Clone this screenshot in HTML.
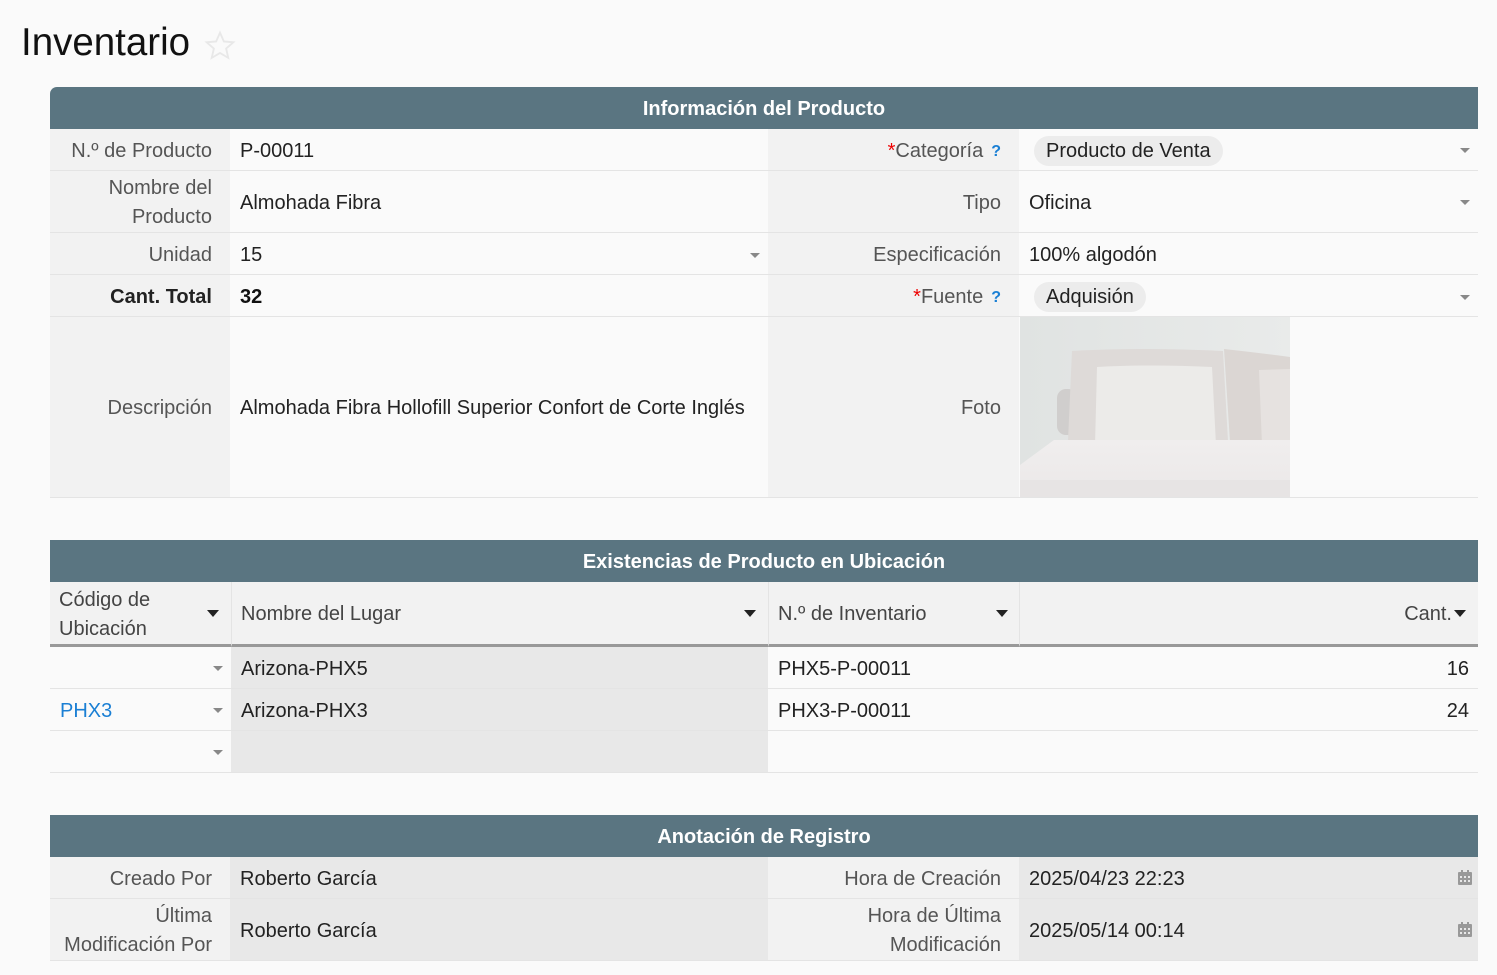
<!DOCTYPE html>
<html><head><meta charset="utf-8">
<style>
*{box-sizing:border-box;margin:0;padding:0}
body{width:1497px;height:975px;background:#fafafa;font-family:"Liberation Sans",sans-serif;color:#222;position:relative;overflow:hidden;font-size:20px}
.a{position:absolute}
.hd{position:absolute;left:50px;width:1428px;height:42px;background:#5a7581;color:#fff;font-weight:bold;font-size:20px;text-align:center;line-height:44px}
.lb{position:absolute;background:#f2f2f2;color:#555;text-align:right;padding-right:18px;padding-top:3px;display:flex;align-items:center;justify-content:flex-end;line-height:29px;border-bottom:1px solid #e4e4e4}
.vl{position:absolute;background:#fafafa;color:#222;padding-left:10px;padding-top:3px;display:flex;align-items:center;border-bottom:1px solid #e4e4e4}
.ro{background:#e8e8e8}
.dd{position:absolute;width:0;height:0;border-left:5px solid transparent;border-right:5px solid transparent;border-top:5px solid #888}
.ddb{position:absolute;width:0;height:0;border-left:6px solid transparent;border-right:6px solid transparent;border-top:7px solid #222}
.pill{background:#ececec;border-radius:16px;padding:4px 12px 3px;margin-left:5px;margin-top:-1px}
.req{color:#e00}
.q{color:#1a7fd4;font-size:16px;font-weight:bold;margin-left:8px}
.ch{position:absolute;background:#f2f2f2;color:#444;display:flex;align-items:center;padding-left:9px;padding-top:3px;line-height:29px;border-bottom:3px solid #999}
</style></head><body>
<div class="a" style="left:21px;top:21px;font-size:38.5px;color:#111">Inventario</div>
<svg class="a" style="left:204px;top:30px" width="32" height="32" viewBox="0 0 24 24"><path d="M12 2l2.9 6.6 7.1.6-5.4 4.7 1.6 7-6.2-3.7-6.2 3.7 1.6-7L2 9.2l7.1-.6z" fill="none" stroke="#e8e8e8" stroke-width="1.4"/></svg>

<div class="hd" style="top:87px;border-radius:7px 0 0 0">Información del Producto</div>
<div class="lb" style="left:50px;top:129px;width:180px;height:42px">N.º de Producto</div>
<div class="vl" style="left:230px;top:129px;width:538px;height:42px">P-00011</div>
<div class="lb" style="left:768px;top:129px;width:251px;height:42px"><span class="req">*</span>Categoría<span class="q">?</span></div>
<div class="vl" style="left:1019px;top:129px;width:459px;height:42px"><span class="pill">Producto de Venta</span></div>
<div class="dd" style="left:1460px;top:148px"></div>

<div class="lb" style="left:50px;top:171px;width:180px;height:62px">Nombre del<br>Producto</div>
<div class="vl" style="left:230px;top:171px;width:538px;height:62px">Almohada Fibra</div>
<div class="lb" style="left:768px;top:171px;width:251px;height:62px">Tipo</div>
<div class="vl" style="left:1019px;top:171px;width:459px;height:62px">Oficina</div>
<div class="dd" style="left:1460px;top:200px"></div>

<div class="lb" style="left:50px;top:233px;width:180px;height:42px">Unidad</div>
<div class="vl" style="left:230px;top:233px;width:538px;height:42px">15</div>
<div class="dd" style="left:750px;top:253px"></div>
<div class="lb" style="left:768px;top:233px;width:251px;height:42px">Especificación</div>
<div class="vl" style="left:1019px;top:233px;width:459px;height:42px">100% algodón</div>

<div class="lb" style="left:50px;top:275px;width:180px;height:42px;font-weight:bold;color:#222">Cant. Total</div>
<div class="vl" style="left:230px;top:275px;width:538px;height:42px;font-weight:bold;color:#111">32</div>
<div class="lb" style="left:768px;top:275px;width:251px;height:42px"><span class="req">*</span>Fuente<span class="q">?</span></div>
<div class="vl" style="left:1019px;top:275px;width:459px;height:42px"><span class="pill">Adquisión</span></div>
<div class="dd" style="left:1460px;top:295px"></div>

<div class="lb" style="left:50px;top:317px;width:180px;height:181px">Descripción</div>
<div class="vl" style="left:230px;top:317px;width:538px;height:181px">Almohada Fibra Hollofill Superior Confort de Corte Inglés</div>
<div class="lb" style="left:768px;top:317px;width:251px;height:181px">Foto</div>
<div class="vl" style="left:1019px;top:317px;width:459px;height:181px"></div>
<svg class="a" style="left:1020px;top:317px" width="270" height="180" viewBox="0 0 270 180">
<defs><linearGradient id="w" x1="0" x2="1"><stop offset="0" stop-color="#e0e3e2"/><stop offset="1" stop-color="#e9ebea"/></linearGradient>
<linearGradient id="m" x1="0" y1="0" x2="0" y2="1"><stop offset="0" stop-color="#f0eeee"/><stop offset="1" stop-color="#ebe8e8"/></linearGradient></defs>
<rect width="270" height="180" fill="url(#w)"/>
<rect x="37" y="72" width="20" height="46" rx="9" fill="#d0cecd"/>
<path d="M52 34 Q120 30 203 34 L208 124 L48 124 Z" fill="#dedad8"/>
<path d="M204 32 Q240 36 270 40 L270 125 L210 125 Z" fill="#dbd6d3"/>
<path d="M77 50 Q130 47 192 50 L196 128 L75 129 Z" fill="#ecebe9"/>
<path d="M239 53 L270 52 L270 128 L242 128 Z" fill="#e6e2e0"/>
<path d="M0 148 L34 123 L270 123 L270 180 L0 180 Z" fill="url(#m)"/>
<rect x="0" y="163" width="270" height="17" fill="#e7e4e4"/>
</svg>

<div class="hd" style="top:540px">Existencias de Producto en Ubicación</div>
<div class="ch" style="left:50px;top:582px;width:181px;height:65px">Código de<br>Ubicación</div>
<div class="ddb" style="left:207px;top:610px"></div>
<div class="ch" style="left:231px;top:582px;width:537px;height:65px;border-left:1px solid #e4e4e4">Nombre del Lugar</div>
<div class="ddb" style="left:744px;top:610px"></div>
<div class="ch" style="left:768px;top:582px;width:251px;height:65px;border-left:1px solid #e4e4e4">N.º de Inventario</div>
<div class="ddb" style="left:996px;top:610px"></div>
<div class="ch" style="left:1019px;top:582px;width:459px;height:65px;border-left:1px solid #e4e4e4;justify-content:flex-end;padding-right:26px">Cant.</div>
<div class="ddb" style="left:1454px;top:610px"></div>

<div class="vl" style="left:50px;top:647px;width:181px;height:42px"></div>
<div class="vl ro" style="left:231px;top:647px;width:537px;height:42px">Arizona-PHX5</div>
<div class="vl" style="left:768px;top:647px;width:710px;height:42px">PHX5-P-00011<span style="margin-left:auto;padding-right:9px">16</span></div>
<div class="vl" style="left:50px;top:689px;width:181px;height:42px;color:#1a7fd4">PHX3</div>
<div class="vl ro" style="left:231px;top:689px;width:537px;height:42px">Arizona-PHX3</div>
<div class="vl" style="left:768px;top:689px;width:710px;height:42px">PHX3-P-00011<span style="margin-left:auto;padding-right:9px">24</span></div>
<div class="vl" style="left:50px;top:731px;width:181px;height:42px"></div>
<div class="vl ro" style="left:231px;top:731px;width:537px;height:42px"></div>
<div class="vl" style="left:768px;top:731px;width:710px;height:42px"></div>
<div class="dd" style="left:213px;top:666px"></div>
<div class="dd" style="left:213px;top:708px"></div>
<div class="dd" style="left:213px;top:750px"></div>

<div class="hd" style="top:815px">Anotación de Registro</div>
<div class="lb" style="left:50px;top:857px;width:180px;height:42px">Creado Por</div>
<div class="vl ro" style="left:230px;top:857px;width:538px;height:42px">Roberto García</div>
<div class="lb" style="left:768px;top:857px;width:251px;height:42px">Hora de Creación</div>
<div class="vl ro" style="left:1019px;top:857px;width:459px;height:42px">2025/04/23 22:23</div>
<div class="lb" style="left:50px;top:899px;width:180px;height:62px">Última<br>Modificación Por</div>
<div class="vl ro" style="left:230px;top:899px;width:538px;height:62px">Roberto García</div>
<div class="lb" style="left:768px;top:899px;width:251px;height:62px">Hora de Última<br>Modificación</div>
<div class="vl ro" style="left:1019px;top:899px;width:459px;height:62px">2025/05/14 00:14</div>
<svg class="a" style="left:1458px;top:870px" width="14" height="15" viewBox="0 0 14 15"><rect x="0" y="2" width="14" height="13" rx="1" fill="#999"/><rect x="3" y="0" width="2" height="4" fill="#999"/><rect x="9" y="0" width="2" height="4" fill="#999"/><g fill="#e8e8e8"><rect x="2" y="6" width="2" height="2"/><rect x="6" y="6" width="2" height="2"/><rect x="10" y="6" width="2" height="2"/><rect x="2" y="10" width="2" height="2"/><rect x="6" y="10" width="2" height="2"/><rect x="10" y="10" width="2" height="2"/></g></svg>
<svg class="a" style="left:1458px;top:922px" width="14" height="15" viewBox="0 0 14 15"><rect x="0" y="2" width="14" height="13" rx="1" fill="#999"/><rect x="3" y="0" width="2" height="4" fill="#999"/><rect x="9" y="0" width="2" height="4" fill="#999"/><g fill="#e8e8e8"><rect x="2" y="6" width="2" height="2"/><rect x="6" y="6" width="2" height="2"/><rect x="10" y="6" width="2" height="2"/><rect x="2" y="10" width="2" height="2"/><rect x="6" y="10" width="2" height="2"/><rect x="10" y="10" width="2" height="2"/></g></svg>
</body></html>
